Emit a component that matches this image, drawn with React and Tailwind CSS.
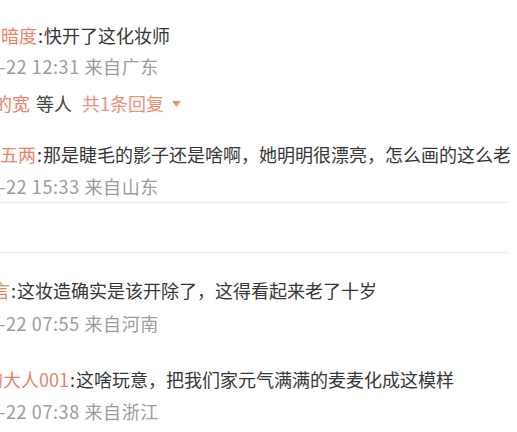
import React from 'react';

const Name = ({ children }) => <span className="text-[#e8826a]">{children}</span>;

const Time = ({ children, className = '' }) => (
    <div className={`-ml-[22px] text-[18px] leading-[31px] tracking-[0.6px] text-[#9b9b9b] whitespace-nowrap ${className}`}>{children}</div>
);

const Line = ({ children, className = '' }) => (
    <div className={`text-[18px] leading-[31px] text-[#363636] whitespace-nowrap ${className}`}>{children}</div>
);

const App = () => {
    return (
        <div
            className="w-[517px] h-[432px] overflow-hidden bg-white"
            style={{ fontFamily: '"Noto Sans CJK SC", "Noto Sans", sans-serif' }}
        >
            <div className="pt-[20px]">
                <Line className="ml-[1px]"><Name>暗度</Name><span className="mx-[1px]">:</span>快开了这化妆师</Line>
                <Time>01-22 12:31 来自广东</Time>
                <Line className="mt-[6px] -ml-[6px] flex items-center">
                    <Name>的宽</Name>
                    <span className="ml-[6px] text-[#444]">等人</span>
                    <span className="ml-[10px] text-[#ec8f78]">共1条回复</span>
                    <svg className="ml-[8px]" width="9" height="6" viewBox="0 0 9 6">
                        <path d="M0 0 H9 L4.5 6 Z" fill="#ec8f78" />
                    </svg>
                </Line>
            </div>

            <div className="mt-[20px]">
                <Line><Name>五两</Name><span className="mx-[1px]">:</span>那是睫毛的影子还是啥啊，她明明很漂亮，怎么画的这么老</Line>
                <Time className="mt-[1px]">01-22 15:33 来自山东</Time>
            </div>

            <div className="h-px bg-[#ececec] mr-[8px]" />
            <div className="h-[49px]" />
            <div className="h-px bg-[#ececec] mr-[8px]" />

            <div className="mt-[22px]">
                <Line className="-ml-[8px]"><Name>言</Name><span className="mx-[1px]">:</span>这妆造确实是该开除了，这得看起来老了十岁</Line>
                <Time className="mt-[2px]">01-22 07:55 来自河南</Time>
            </div>

            <div className="mt-[25px]">
                <Line className="-ml-[15px]"><Name>的大人001</Name><span className="mx-[1px]">:</span>这啥玩意，把我们家元气满满的麦麦化成这模样</Line>
                <Time className="mt-[1px]">01-22 07:38 来自浙江</Time>
            </div>
        </div>
    );
};

export default App;
